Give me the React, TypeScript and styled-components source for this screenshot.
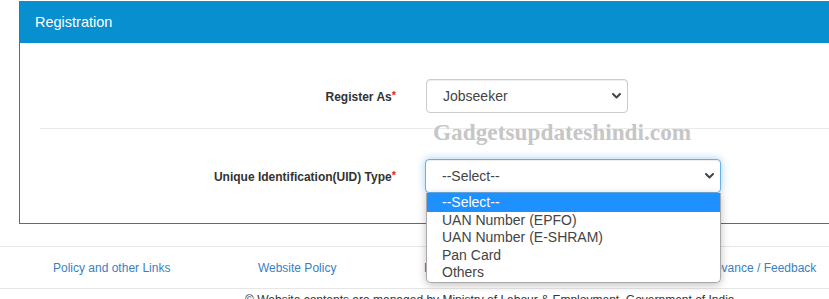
import styled, { createGlobalStyle } from "styled-components";

const GlobalStyle = createGlobalStyle`
  html, body {
    margin: 0;
    padding: 0;
    background: #fff;
    overflow: hidden;
  }
  body {
    font-family: "Liberation Sans", Arial, sans-serif;
    color: #333;
  }
`;

const Page = styled.div`
  width: 829px;
  height: 299px;
  position: relative;
  overflow: hidden;
`;

const PanelWrap = styled.div`
  padding: 1px 0 0 19px;
`;

const Panel = styled.div`
  width: 840px;
  border: 1px solid #3e72a8;
  border-top: none;
`;

const PanelHeading = styled.div`
  height: 42px;
  background: #078fcf;
  color: #fff;
  font-size: 14.5px;
  display: flex;
  align-items: center;
  padding-left: 15px;
`;

const PanelBody = styled.div`
  padding: 36px 0 30px 20px;
`;

const FormRow = styled.div<{ $gap?: number }>`
  display: grid;
  grid-template-columns: 356px auto;
  column-gap: ${({ $gap }) => $gap ?? 30}px;
  align-items: center;
`;

const Label = styled.label`
  text-align: right;
  font-size: 12px;
  font-weight: bold;
  color: #333;
`;

const Required = styled.span`
  color: #e3262c;
  font-size: 11px;
  vertical-align: 2px;
`;

const Divider = styled.hr`
  border: none;
  border-top: 1px solid #eaeaea;
  margin: 15px 0 30px 0;
`;

const SelectBox = styled.div<{ $width: number; $focused?: boolean }>`
  position: relative;
  width: ${({ $width }) => $width}px;
  height: 34px;
  box-sizing: border-box;
  border: 1px solid ${({ $focused }) => ($focused ? "#66afe9" : "#cccccc")};
  border-radius: 4px;
  background: #fff;
  box-shadow: ${({ $focused }) =>
    $focused
      ? "inset 0 1px 1px rgba(0,0,0,.075), 0 0 8px rgba(102,175,233,.6)"
      : "inset 0 1px 1px rgba(0,0,0,.075)"};
  display: flex;
  align-items: center;
  justify-content: space-between;
  padding: 0 6px 0 16px;
  font-size: 14px;
  color: #444;
`;

const Chevron = () => (
  <svg width="9" height="6" viewBox="0 0 9 6">
    <polyline
      points="1,1 4.5,4.5 8,1"
      fill="none"
      stroke="#444"
      strokeWidth="2"
      strokeLinecap="round"
      strokeLinejoin="round"
    />
  </svg>
);

const Options = styled.ul`
  position: absolute;
  top: 193px;
  left: 426px;
  width: 295px;
  margin: 0;
  padding: 0;
  list-style: none;
  background: #fff;
  border: 1px solid #a9a9a9;
  border-top: none;
  border-radius: 0 0 5px 5px;
  box-sizing: border-box;
  box-shadow: 0 2px 8px rgba(0, 0, 0, 0.25);
  overflow: hidden;
  z-index: 5;
`;

const Option = styled.li<{ $active?: boolean }>`
  height: 17.6px;
  line-height: 17.6px;
  padding-left: 15px;
  font-size: 14px;
  color: ${({ $active }) => ($active ? "#fff" : "#444")};
  background: ${({ $active }) => ($active ? "#1e90ff" : "transparent")};
  &:first-child {
    height: 18.5px;
    line-height: 18.5px;
  }
`;

const Watermark = styled.div`
  position: absolute;
  top: 119px;
  left: 433px;
  font-family: "Liberation Serif", "Times New Roman", serif;
  font-weight: bold;
  font-size: 23.3px;
  color: #c6c6c6;
  pointer-events: none;
`;

const Footer = styled.footer`
  margin-top: 22px;
  border-top: 1px solid #e6e6e6;
`;

const FooterLinks = styled.nav`
  height: 41px;
  display: flex;
  align-items: center;
  gap: 87.5px;
  padding-left: 53px;
  border-bottom: 1px solid #e6e6e6;
`;

const FooterLink = styled.a`
  font-size: 12px;
  color: #3a80c0;
  text-decoration: none;
  white-space: nowrap;
`;

const Copyright = styled.div`
  padding: 3px 0 0 245px;
  font-size: 12px;
  line-height: 16px;
  color: #333;
  white-space: nowrap;
`;

const uidTypes = [
  "--Select--",
  "UAN Number (EPFO)",
  "UAN Number (E-SHRAM)",
  "Pan Card",
  "Others",
];

const footerLinks = [
  "Policy and other Links",
  "Website Policy",
  "Disclaimer",
  "Sitemap",
  "Grievance / Feedback",
];

export default function App() {
  return (
    <Page>
      <GlobalStyle />
      <PanelWrap>
        <Panel>
          <PanelHeading>Registration</PanelHeading>
          <PanelBody>
            <FormRow>
              <Label>
                Register As<Required>*</Required>
              </Label>
              <SelectBox $width={202}>
                Jobseeker
                <Chevron />
              </SelectBox>
            </FormRow>
            <Divider />
            <FormRow $gap={29}>
              <Label>
                Unique Identification(UID) Type<Required>*</Required>
              </Label>
              <SelectBox $width={296} $focused>
                --Select--
                <Chevron />
              </SelectBox>
            </FormRow>
          </PanelBody>
        </Panel>
      </PanelWrap>
      <Footer>
        <FooterLinks>
          {footerLinks.map((l) => (
            <FooterLink key={l} href="#">
              {l}
            </FooterLink>
          ))}
        </FooterLinks>
        <Copyright>
          © Website contents are managed by Ministry of Labour &amp; Employment,
          Government of India
        </Copyright>
      </Footer>
      <Watermark>Gadgetsupdateshindi.com</Watermark>
      <Options>
        {uidTypes.map((t, i) => (
          <Option key={t} $active={i === 0}>
            {t}
          </Option>
        ))}
      </Options>
    </Page>
  );
}
